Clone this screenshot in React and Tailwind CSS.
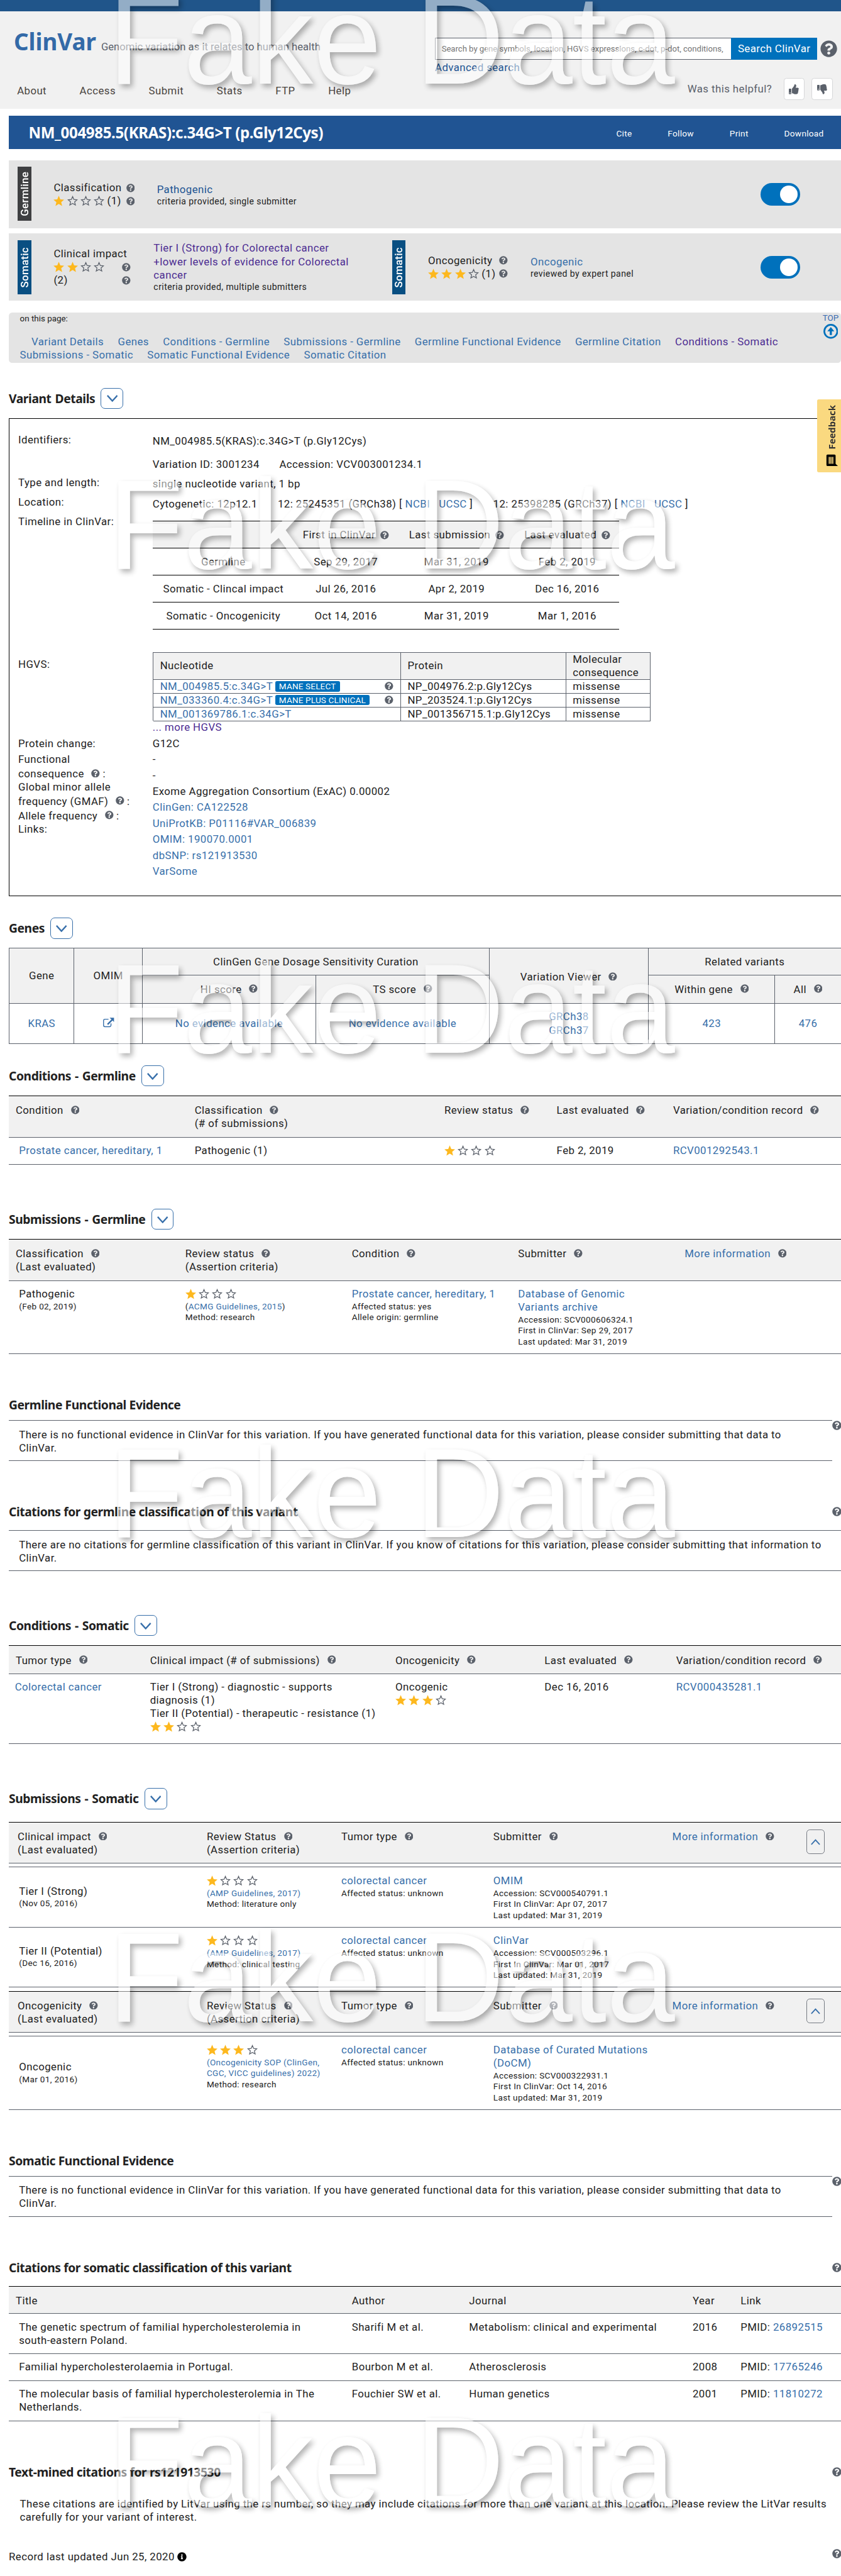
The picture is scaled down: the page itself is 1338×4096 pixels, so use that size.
import React from "react";
import { FaQuestionCircle, FaInfoCircle, FaThumbsUp, FaThumbsDown } from "react-icons/fa";
import { MdMessage } from "react-icons/md";

const STAR =
  "M12 .4l3.400 7.900 8.500.7-6.500 5.600 2 8.500-7.400-4.500-7.400 4.500 2-8.500L.1 9l8.500-.7z";

function Stars({ n }) {
  return (
    <span className="flex h-6 items-center">
      {[0, 1, 2, 3].map((i) => (
        <svg key={i} viewBox="0 0 24 24" className="mr-[4.800px] block h-[19.500px] w-[19.500px] shrink-0">
          {i < n ? (
            <path d={STAR} fill="#fdb81e" />
          ) : (
            <path
              d="M12 2.200l2.800 6.600 7.100.6-5.400 4.700 1.700 7-6.200-3.700-6.200 3.700 1.700-7-5.400-4.700 7.100-.6z"
              fill="none"
              stroke="#5b616b"
              strokeWidth="1.800"
            />
          )}
        </svg>
      ))}
    </span>
  );
}

const Help = ({ className = "" }) => (
  <FaQuestionCircle className={"inline-block h-[15.6px] w-[15.6px] shrink-0 text-[#5b616b] " + className} />
);

/* Column heading followed by its help icon */
const H = ({ children, link }) => (
  <span className="whitespace-nowrap">
    <span className={link ? "text-[#376faa]" : ""}>{children}</span>
    <Help className="ml-[13.5px] align-[-0.5px]" />
  </span>
);

const A = ({ children, className = "" }) => <a className={"text-[#376faa] " + className}>{children}</a>;

const Small = ({ children, className = "" }) => (
  <div className={"whitespace-nowrap text-[15.5px] leading-5 tracking-[0.4px] " + className}>{children}</div>
);

function Heading({ children, toggle, help, className = "" }) {
  return (
    <div className={"flex h-[38px] items-center " + className}>
      <h2
        className={
          "whitespace-nowrap font-['Noto_Sans',sans-serif] text-[22px] font-bold leading-6 tracking-[-0.48px] text-[#212121] " +
          (toggle ? "[word-spacing:1.6px]" : "")
        }
      >
        {children}
      </h2>
      {toggle && (
        <span className="ml-[10.5px] flex h-[38px] w-[41px] items-center justify-center rounded-[8px] border border-[#376faa]">
          <svg viewBox="0 0 20 13" className="mt-[2px] h-[13px] w-5">
            <path d="M1 1l9 10 9-10" fill="none" stroke="#376faa" strokeWidth="2.6" />
          </svg>
        </span>
      )}
      {help && <FaQuestionCircle className="mr-[-1px] ml-auto h-[17px] w-[17px] text-[#5b616b]" />}
    </div>
  );
}

const Tag = ({ children, className = "" }) => (
  <div className={"mt-3 flex h-[98px] w-[24.5px] shrink-0 items-center justify-center " + className}>
    <span className="rotate-180 text-[19.4px] font-medium leading-[24px] tracking-[0.3px] text-white [writing-mode:vertical-rl]">
      {children}
    </span>
  </div>
);

const Toggle = () => (
  <div className="mt-[41px] mr-[75px] ml-auto flex h-[41px] w-[72px] items-center justify-end rounded-full bg-[#0071bc] pr-[4px]">
    <span className="h-[32px] w-[32px] rounded-full bg-white" />
  </div>
);

const UpButton = () => (
  <span className="mt-[-1px] ml-[-1px] flex h-[45px] w-[33px] items-center justify-center rounded-[6px] border border-[#757a82]">
    <svg viewBox="0 0 18 11" className="h-[11px] w-[17px]">
      <path d="M1 10.4L9 1.6l8 8.8" fill="none" stroke="#376faa" strokeWidth="2.2" />
    </svg>
  </span>
);

const Notice = ({ children, className }) => (
  <div className={"h-[74px] border-y border-[#5b616b] pt-[13px] pl-[18.5px] " + className}>{children}</div>
);

const GERM_COND = "grid grid-cols-[325px_453.5px_204px_211.5px_1fr] border-b border-[#5b616b] pl-[12.5px]";
const GERM_SUB = "grid grid-cols-[308px_302.5px_302px_302.5px_1fr] border-b border-[#5b616b] pl-[12.5px]";
const SOM_COND = "grid grid-cols-[244px_445.5px_271px_239px_1fr] border-b border-[#5b616b] pl-[12.5px]";
const SOM_SUB = "grid grid-cols-[343.5px_244.5px_276px_325px_245px_1fr] border-b border-[#5b616b] pl-[16px]";
const CITES = "grid grid-cols-[610.5px_213px_406px_87px_1fr] border-b border-[#5b616b] pl-[12.5px]";

function SomHead({ first }) {
  return (
    <div className={SOM_SUB + " h-[76px] border-t border-t-black bg-[#f1f1f1] pt-[14px]"}>
      <div><H>{first}</H><br />(Last evaluated)</div>
      <div><H>Review Status</H><br />(Assertion criteria)</div>
      <div><H>Tumor type</H></div>
      <div><H>Submitter</H></div>
      <div><H link>More information</H></div>
      <div><UpButton /></div>
    </div>
  );
}

function SomRow({ className, tier, date, stars, guide, method, submitter, acc, first }) {
  return (
    <div className={SOM_SUB + " pt-[12px] " + className}>
      <div className="mb-[13px] flex flex-col justify-center pl-[2.5px]">
        <div>{tier}</div>
        <Small>({date})</Small>
      </div>
      <div>
        <Stars n={stars} />
        <Small className="mt-px text-[#376faa]">{guide}</Small>
        <Small>Method: {method}</Small>
      </div>
      <div>
        <A>colorectal cancer</A>
        <Small className="mt-px">Affected status: unknown</Small>
      </div>
      <div>
        <A>{submitter}</A>
        <Small className="mt-px">Accession: {acc}</Small>
        <Small>First In ClinVar: {first}</Small>
        <Small>Last updated: Mar 31, 2019</Small>
      </div>
    </div>
  );
}

function VariantDetails() {
  const hg = [
    ["NM_004985.5:c.34G>T", "MANE SELECT", "NP_004976.2:p.Gly12Cys"],
    ["NM_033360.4:c.34G>T", "MANE PLUS CLINICAL", "NP_203524.1:p.Gly12Cys"],
    ["NM_001369786.1:c.34G>T", null, "NP_001356715.1:p.Gly12Cys"],
  ];
  const tl = [
    ["Germline", "Sep 29, 2017", "Mar 31, 2019", "Feb 2, 2019"],
    ["Somatic - Clincal impact", "Jul 26, 2016", "Apr 2, 2019", "Dec 16, 2016"],
    ["Somatic - Oncogenicity", "Oct 14, 2016", "Mar 31, 2019", "Mar 1, 2016"],
  ];
  return (
    <div className="mt-[17px] flex h-[868px] w-[1530px] border border-black">
      <div className="w-[260px] shrink-0 pt-[26px] pl-4 whitespace-nowrap">
        <div>Identifiers:</div>
        <div className="mt-[54px]">Type and length:</div>
        <div className="mt-3">Location:</div>
        <div className="mt-[11px]">Timeline in ClinVar:</div>
        <div className="mt-[235px]">HGVS:</div>
        <div className="mt-[120px]">Protein change:</div>
        <div className="mt-[5px]">Functional</div>
        <div className="mt-[2px]">consequence <Help className="mx-[5px] ml-[8px] align-[0px]" />:</div>
        <div>Global minor allele</div>
        <div className="mt-[2px]">frequency (GMAF) <Help className="mx-[5px] ml-[8px] align-[0px]" />:</div>
        <div className="mt-[2px]">Allele frequency <Help className="mx-[5px] ml-[8px] align-[0px]" />:</div>
        <div>Links:</div>
      </div>
      <div className="pt-[29px] whitespace-nowrap">
        <div>NM_004985.5(KRAS):c.34G&gt;T (p.Gly12Cys)</div>
        <div className="mt-[18px] flex gap-[36px]"><span>Variation ID: 3001234</span><span>Accession: VCV003001234.1</span></div>
        <div className="mt-3">single nucleotide variant, 1 bp</div>
        <div className="mt-3 flex gap-[37px]">
          <span>Cytogenetic: 12p12.1</span>
          <span>12: 25245351 (GRCh38) [ <A>NCBI</A><A className="ml-[16px]">UCSC</A> ]</span>
          <span>12: 25398285 (GRCh37) [ <A>NCBI</A><A className="ml-[16px]">UCSC</A> ]</span>
        </div>
        <div className="mt-[18.6px] h-[197px] w-[847px] border-t border-black text-center">
          <div className="grid h-[49px] grid-cols-[257px_188px_214px_188px] items-center border-b border-black bg-[#f1f1f1]">
            <div />
            {["First in ClinVar", "Last submission", "Last evaluated"].map((t) => (
              <div key={t}>{t}<Help className="ml-[9px] align-[-2px]" /></div>
            ))}
          </div>
          {tl.map((r) => (
            <div key={r[0]} className="grid h-[49px] grid-cols-[257px_188px_214px_188px] items-center border-b border-black">
              {r.map((c, i) => <div key={i}>{c}</div>)}
            </div>
          ))}
        </div>
        <div className="mt-[41px] h-[125px] w-[904px] border-t border-l border-[#5b616b]">
          <div className="grid h-[49px] grid-cols-[450px_300px_153px] bg-[#f1f1f1]">
            <div className="flex items-center border-r border-b border-[#5b616b] pl-[12.5px]">Nucleotide</div>
            <div className="flex items-center border-r border-b border-[#5b616b] pl-[12px]">Protein</div>
            <div className="border-r border-b border-[#5b616b] pl-[12px]">Molecular<br />consequence</div>
          </div>
          {hg.map((r) => (
            <div key={r[0]} className="grid h-[25px] grid-cols-[450px_300px_153px]">
              <div className="flex items-center border-r border-b border-[#5b616b] pr-[13px] pl-[12.5px]">
                <A>{r[0]}</A>
                {r[1] && (
                  <>
                    <span className="ml-[4px] h-[19px] rounded-[3px] bg-[#0071bc] px-[7px] text-[15.4px] leading-[20px] tracking-[0.22px] text-white">{r[1]}</span>
                    <Help className="ml-auto" />
                  </>
                )}
              </div>
              <div className="border-r border-b border-[#5b616b] pl-[12px]">{r[2]}</div>
              <div className="border-r border-b border-[#5b616b] pl-[12px]">missense</div>
            </div>
          ))}
        </div>
        <div className="flex flex-col gap-[5px]">
          <div className="text-[#4c2c92]">... more HGVS</div>
          <div>G12C</div>
          <div>-</div>
          <div>-</div>
          <div>Exome Aggregation Consortium (ExAC) 0.00002</div>
          <A>ClinGen: CA122528</A>
          <A>UniProtKB: P01116#VAR_006839</A>
          <A>OMIM: 190070.0001</A>
          <A>dbSNP: rs121913530</A>
          <A>VarSome</A>
        </div>
      </div>
    </div>
  );
}

const TH = ({ className = "", children }) => (
  <div className={"flex items-center justify-center border-r border-b border-[#5b616b] bg-[#f1f1f1] " + className}>{children}</div>
);
const TD = ({ children }) => (
  <div className="flex flex-col items-center justify-center border-r border-b border-[#5b616b] text-[#376faa]">{children}</div>
);

function Genes() {
  return (
    <div className="mt-[17px] grid h-[174px] w-[1512px] grid-cols-[118px_124px_315px_315px_289px_230px_1fr] grid-rows-[49px_51px_73px] border-t border-l border-[#5b616b]">
      <TH className="row-span-2">Gene</TH>
      <TH className="row-span-2">OMIM</TH>
      <TH className="col-span-2">ClinGen Gene Dosage Sensitivity Curation</TH>
      <TH className="row-span-2 pt-[4px]"><H>Variation Viewer</H></TH>
      <TH className="col-span-2">Related variants</TH>
      <TH><H>HI score</H></TH>
      <TH><H>TS score</H></TH>
      <TH><H>Within gene</H></TH>
      <TH><H>All</H></TH>
      <TD>KRAS</TD>
      <TD>
        <svg viewBox="0 0 22 18" className="-mt-1 h-[18px] w-[22px]">
          <path d="M11 3H4.5A2.5 2.5 0 0 0 2 5.500V14a2.500 2.500 0 0 0 2.500 2.500H13a2.500 2.500 0 0 0 2.500-2.500v-3.500" fill="none" stroke="#376faa" strokeWidth="1.6" />
          <path d="M13 .3h8v7.700l-2.700-2.700-8 8-2-2 8-8z" fill="#376faa" />
        </svg>
      </TD>
      <TD>No evidence available</TD>
      <TD>No evidence available</TD>
      <TD><span>GRCh38</span><span>GRCh37</span></TD>
      <TD>423</TD>
      <TD>476</TD>
    </div>
  );
}

function Watermark() {
  return (
    <div className="pointer-events-none absolute inset-0 overflow-hidden">
      <svg className="absolute h-0 w-0">
        <filter id="wm" x="-5%" y="-20%" width="110%" height="140%" colorInterpolationFilters="sRGB">
          <feGaussianBlur in="SourceAlpha" stdDeviation="4.8" />
          <feOffset dx="5" dy="6" />
          <feComponentTransfer><feFuncA type="linear" slope="0.3" /></feComponentTransfer>
          <feComposite in2="SourceAlpha" operator="out" result="shadow" />
          <feComponentTransfer in="SourceGraphic" result="face"><feFuncA type="linear" slope="0.52" /></feComponentTransfer>
          <feMerge><feMergeNode in="shadow" /><feMergeNode in="face" /></feMerge>
        </filter>
      </svg>
      <div className="-mt-[36px] ml-[197px]">
        {[0, 1, 2, 3, 4, 5].map((i) => (
          <div key={i} className="h-[879.2px]">
            <div className="h-[223px] w-[1080px] origin-[0_189px] scale-y-[1.04] font-['Liberation_Sans',Arial,sans-serif] text-[223px] leading-[223px] tracking-normal whitespace-nowrap text-white [filter:url(#wm)]">
              Fake Data
            </div>
          </div>
        ))}
      </div>
    </div>
  );
}

export default function App() {
  const cites = [
    ["h-[73px]", <>The genetic spectrum of familial hypercholesterolemia in<br />south-eastern Poland.</>, "Sharifi M et al.", "Metabolism: clinical and experimental", "2016", "26892515"],
    ["h-[49px]", "Familial hypercholesterolaemia in Portugal.", "Bourbon M et al.", "Atherosclerosis", "2008", "17765246"],
    ["h-[73px]", <>The molecular basis of familial hypercholesterolemia in The<br />Netherlands.</>, "Fouchier SW et al.", "Human genetics", "2001", "11810272"],
  ];
  return (
    <div className="h-[4096px] w-[1338px] overflow-hidden bg-white">
      <div className="relative h-[4677px] w-[1528px] overflow-hidden font-['Roboto',sans-serif] text-[19.2px] leading-6 tracking-[0.5px] text-[#212121] [zoom:0.876]">
        <div className="h-5 bg-[#20558a]" />
        <header className="h-[177px] bg-[#f1f1f1]">
          <div className="flex h-[122px] justify-between">
            <div className="flex items-baseline gap-[9px] pt-[31px] pl-[25px] whitespace-nowrap">
              <span className="font-['Noto_Sans',sans-serif] text-[42px] font-bold leading-[48px] tracking-normal text-[#336aa8]">ClinVar</span>
              <span className="text-[19px] tracking-[0.03px] text-[#5b616b]">Genomic variation as it relates to human health</span>
            </div>
            <div className="w-[738px] pt-12">
              <div className="flex items-center">
                <div className="flex h-10 w-[538px] items-center overflow-hidden border border-r-0 border-[#5b616b] bg-white pl-[11px] text-[15px] tracking-[-0.02px] whitespace-nowrap text-[#757575]">
                  Search by gene symbols, location, HGVS expressions, c-dot, p-dot, conditions,
                </div>
                <div className="flex h-10 w-[156px] items-center justify-center bg-[#0071bc] text-[19.400px] tracking-[0.400px] text-white">Search ClinVar</div>
                <FaQuestionCircle className="ml-[6px] h-[31px] w-[31px] text-[#5b616b]" />
              </div>
              <div className="mt-[3px] text-[#205493]">Advanced search</div>
            </div>
          </div>
          <div className="flex h-10 items-center">
            <nav className="flex gap-[60px] pt-[6px] pl-[31px] text-[#494440]">
              {["About", "Access", "Submit", "Stats", "FTP", "Help"].map((t) => <a key={t}>{t}</a>)}
            </nav>
            <span className="ml-auto text-[#5b616b]">Was this helpful?</span>
            <span className="ml-[21px] flex h-10 w-[38px] items-center justify-center rounded-[5px] border border-[#d6d7d9] bg-white text-[#5b616b]"><FaThumbsUp className="h-[18px] w-[18px]" /></span>
            <span className="mr-[16px] ml-[13px] flex h-10 w-[38px] items-center justify-center rounded-[5px] border border-[#d6d7d9] bg-white text-[#5b616b]"><FaThumbsDown className="h-[18px] w-[18px]" /></span>
          </div>
        </header>

        <main className="ml-4 w-[1511px]">
          <div className="mt-[13px] flex h-[61px] w-[1512px] items-center bg-[#205493] pl-[36px] text-white">
            <h1 className="font-['Noto_Sans',sans-serif] text-[27.500px] font-bold leading-8 tracking-[-0.42px] whitespace-nowrap">NM_004985.5(KRAS):c.34G&gt;T (p.Gly12Cys)</h1>
            <div className="mt-[4px] mr-[32px] ml-auto flex gap-[65px] text-[15.600px] tracking-[0.3px]">
              <a>Cite</a><a>Follow</a><a>Print</a><a>Download</a>
            </div>
          </div>

          <div className="mt-5 flex h-[123px] w-[1512px] bg-[#e4e4e4] pl-[16.500px]">
            <Tag className="bg-[#3e3f41]">Germline</Tag>
            <div className="mt-[38px] ml-[40.500px] w-[147px] whitespace-nowrap">
              <div className="flex items-center justify-between">Classification<Help /></div>
              <div className="flex items-center justify-between"><span className="flex"><Stars n={1} />(1)</span><Help /></div>
            </div>
            <div className="mt-[41px] ml-[40.500px]">
              <div className="text-[#205493]">Pathogenic</div>
              <div className="text-[16px] leading-5">criteria provided, single submitter</div>
            </div>
            <Toggle />
          </div>

          <div className="mt-[10px] flex h-[122px] w-[1512px] bg-[#e4e4e4] pl-[16.500px]">
            <Tag className="bg-[#094f82]">Somatic</Tag>
            <div className="mt-[25px] ml-[40.500px] w-[140px] whitespace-nowrap">
              <div>Clinical impact</div>
              <div className="flex items-center justify-between"><Stars n={2} /><Help /></div>
              <div className="flex items-center justify-between">(2)<Help /></div>
            </div>
            <div className="mt-[15px] ml-[41.500px] w-[433px] whitespace-nowrap">
              <div className="text-[#4c2c92]">Tier I (Strong) for Colorectal cancer<br />+lower levels of evidence for Colorectal<br />cancer</div>
              <div className="text-[16px] leading-5">criteria provided, multiple submitters</div>
            </div>
            <Tag className="bg-[#094f82]">Somatic</Tag>
            <div className="mt-[37px] ml-[41px] w-[145px] whitespace-nowrap">
              <div className="flex items-center justify-between">Oncogenicity<Help /></div>
              <div className="flex items-center justify-between"><span className="flex"><Stars n={3} />(1)</span><Help /></div>
            </div>
            <div className="mt-[39px] ml-[41px]">
              <A>Oncogenic</A>
              <div className="text-[16px] leading-5">reviewed by expert panel</div>
            </div>
            <Toggle />
          </div>

          <div className="mt-[21px] flex h-[92px] justify-between rounded-[6px] bg-[#e4e4e4] pl-5">
            <div>
              <div className="pt-[2px] text-[15.300px] leading-5 tracking-normal">on this page:</div>
              <div className="mt-[20px] flex gap-[25.500px] pl-[21px] whitespace-nowrap text-[#376faa]">
                {["Variant Details", "Genes", "Conditions - Germline", "Submissions - Germline", "Germline Functional Evidence", "Germline Citation"].map((t) => <a key={t}>{t}</a>)}
                <a className="text-[#4c2c92]">Conditions - Somatic</a>
              </div>
              <div className="flex gap-[25.500px] whitespace-nowrap text-[#376faa]">
                <a>Submissions - Somatic</a><a>Somatic Functional Evidence</a><a>Somatic Citation</a>
              </div>
            </div>
            <div className="mr-[4px] flex flex-col items-center gap-[2px] pt-[3px] text-[15.300px] leading-[16px] tracking-normal text-[#3a6ab0]">
              TOP
              <svg viewBox="0 0 28 28" className="h-[27px] w-[27px]">
                <circle cx="14" cy="14" r="12.300" fill="none" stroke="#0071bc" strokeWidth="3.200" />
                <path d="M14 6l6.500 8h-4.500v7h-4v-7H7.500z" fill="#0071bc" />
              </svg>
            </div>
          </div>

          <Heading toggle className="mt-[45px]">Variant Details</Heading>
          <VariantDetails />

          <Heading toggle className="mt-[39px]">Genes</Heading>
          <Genes />

          <Heading toggle className="mt-[39px]">Conditions - Germline</Heading>
          <div className="mt-[17px] h-[125px]">
            <div className={GERM_COND + " h-[76px] border-t border-t-black bg-[#f1f1f1] pt-[14px]"}>
              <div><H>Condition</H></div>
              <div><H>Classification</H><br />(# of submissions)</div>
              <div><H>Review status</H></div>
              <div><H>Last evaluated</H></div>
              <div><H>Variation/condition record</H></div>
            </div>
            <div className={GERM_COND + " h-[49px] pt-[12px]"}>
              <A className="pl-[6px]">Prostate cancer, hereditary, 1</A>
              <div>Pathogenic (1)</div>
              <Stars n={1} />
              <div>Feb 2, 2019</div>
              <A>RCV001292543.1</A>
            </div>
          </div>

          <Heading toggle className="mt-[80px]">Submissions - Germline</Heading>
          <div className="mt-[17px] h-[209px]">
            <div className={GERM_SUB + " h-[76px] border-t border-t-black bg-[#f1f1f1] pt-[14px]"}>
              <div><H>Classification</H><br />(Last evaluated)</div>
              <div><H>Review status</H><br />(Assertion criteria)</div>
              <div><H>Condition</H></div>
              <div><H>Submitter</H></div>
              <div><H link>More information</H></div>
            </div>
            <div className={GERM_SUB + " h-[133px] pt-[12px]"}>
              <div className="pl-[6px]">Pathogenic<Small className="mt-px">(Feb 02, 2019)</Small></div>
              <div>
                <Stars n={1} />
                <Small className="mt-px">(<A>ACMG Guidelines, 2015</A>)</Small>
                <Small>Method: research</Small>
              </div>
              <div>
                <A className="whitespace-nowrap">Prostate cancer, hereditary, 1</A>
                <Small className="mt-px">Affected status: yes</Small>
                <Small>Allele origin: germline</Small>
              </div>
              <div>
                <A>Database of Genomic<br />Variants archive</A>
                <Small className="mt-px">Accession: SCV000606324.1</Small>
                <Small>First in ClinVar: Sep 29, 2017</Small>
                <Small>Last updated: Mar 31, 2019</Small>
              </div>
            </div>
          </div>

          <Heading className="mt-[73px]">Germline Functional Evidence</Heading>
          <div className="mt-[9px] flex">
            <Notice className="w-[1495px] shrink-0">
              There is no functional evidence in ClinVar for this variation. If you have generated functional data for this variation, please consider submitting that data to<br />ClinVar.
            </Notice>
            <FaQuestionCircle className="mt-px h-[17px] w-[17px] shrink-0 text-[#5b616b]" />
          </div>

          <Heading help className="mt-[73px]">Citations for germline classification of this variant</Heading>
          <Notice className="mt-[15px] w-[1512px] whitespace-nowrap">
            There are no citations for germline classification of this variant in ClinVar. If you know of citations for this variation, please consider submitting that information to<br />ClinVar.
          </Notice>

          <Heading toggle className="mt-[80px]">Conditions - Somatic</Heading>
          <div className="mt-[17px] h-[179px]">
            <div className={SOM_COND + " h-[52px] border-t border-t-black bg-[#f1f1f1] pt-[14px]"}>
              <div><H>Tumor type</H></div>
              <div><H>Clinical impact (# of submissions)</H></div>
              <div><H>Oncogenicity</H></div>
              <div><H>Last evaluated</H></div>
              <div><H>Variation/condition record</H></div>
            </div>
            <div className={SOM_COND + " h-[127px] pt-[12px]"}>
              <A className="-ml-[1.500px]">Colorectal cancer</A>
              <div className="whitespace-nowrap">Tier I (Strong) - diagnostic - supports<br />diagnosis (1)<br />Tier II (Potential) - therapeutic - resistance (1)<Stars n={2} /></div>
              <div>Oncogenic<Stars n={3} /></div>
              <div>Dec 16, 2016</div>
              <A>RCV000435281.1</A>
            </div>
          </div>

          <Heading toggle className="mt-[80px]">Submissions - Somatic</Heading>
          <div className="mt-[23px]">
            <SomHead first="Clinical impact" />
            <div className="mt-[6px] border-t border-[#5b616b]" />
            <SomRow className="h-[109px]" tier="Tier I (Strong)" date="Nov 05, 2016" stars={1} guide="(AMP Guidelines, 2017)" method="literature only" submitter="OMIM" acc="SCV000540791.1" first="Apr 07, 2017" />
            <SomRow className="h-[109px]" tier="Tier II (Potential)" date="Dec 16, 2016" stars={1} guide="(AMP Guidelines, 2017)" method="clinical testing" submitter="ClinVar" acc="SCV000503296.1" first="Mar 01, 2017" />
            <div className="mt-[6px]"><SomHead first="Oncogenicity" /></div>
            <div className="mt-[6px] border-t border-[#5b616b]" />
            <SomRow className="h-[133px]" tier="Oncogenic" date="Mar 01, 2016" stars={3} guide={<>(Oncogenicity SOP (ClinGen,<br />CGC, VICC guidelines) 2022)</>} method="research" submitter={<>Database of Curated Mutations<br />(DoCM)</>} acc="SCV000322931.1" first="Oct 14, 2016" />
          </div>

          <Heading className="mt-[73px]">Somatic Functional Evidence</Heading>
          <div className="mt-[9px] flex">
            <Notice className="w-[1495px] shrink-0">
              There is no functional evidence in ClinVar for this variation. If you have generated functional data for this variation, please consider submitting that data to<br />ClinVar.
            </Notice>
            <FaQuestionCircle className="mt-px h-[17px] w-[17px] shrink-0 text-[#5b616b]" />
          </div>

          <Heading help className="mt-[73px]">Citations for somatic classification of this variant</Heading>
          <div className="mt-[15px] h-[245px] w-[1512px]">
            <div className={CITES + " h-[50px] border-t border-t-black bg-[#f1f1f1] pt-[13px]"}>
              <div>Title</div><div>Author</div><div>Journal</div><div>Year</div><div>Link</div>
            </div>
            {cites.map(([h, title, author, journal, year, id]) => (
              <div key={id} className={CITES + " pt-[12px] whitespace-nowrap " + h}>
                <div className="pl-[6px]">{title}</div>
                <div>{author}</div>
                <div>{journal}</div>
                <div>{year}</div>
                <div>PMID: <A>{id}</A></div>
              </div>
            ))}
          </div>

          <Heading help className="mt-[73px]">Text-mined citations for rs121913530</Heading>
          <p className="mt-[27px] pl-5 whitespace-nowrap">
            These citations are identified by LitVar using the rs number, so they may include citations for more than one variant at this location. Please review the LitVar results<br />
            carefully for your variant of interest.
          </p>
          <div className="mt-[48px] flex items-center">
            Record last updated Jun 25, 2020
            <FaInfoCircle className="ml-[5px] h-[17px] w-[17px] text-black" />
            <FaQuestionCircle className="-mt-[10px] mr-[-1px] ml-auto h-[17px] w-[17px] text-[#5b616b]" />
          </div>
        </main>

        <div className="absolute top-[725px] right-0 flex h-[132px] w-[44px] flex-col items-center justify-end rounded-l-[3px] bg-[#fad980] pb-[9px] pl-[10px]">
          <span className="rotate-180 font-['Open_Sans',sans-serif] text-[17px] leading-5 font-bold tracking-normal text-[#333] [writing-mode:vertical-rl]">Feedback</span>
          <MdMessage className="mt-[7px] h-[25px] w-[25px] -rotate-90 text-black" />
        </div>

        <Watermark />
      </div>
    </div>
  );
}
